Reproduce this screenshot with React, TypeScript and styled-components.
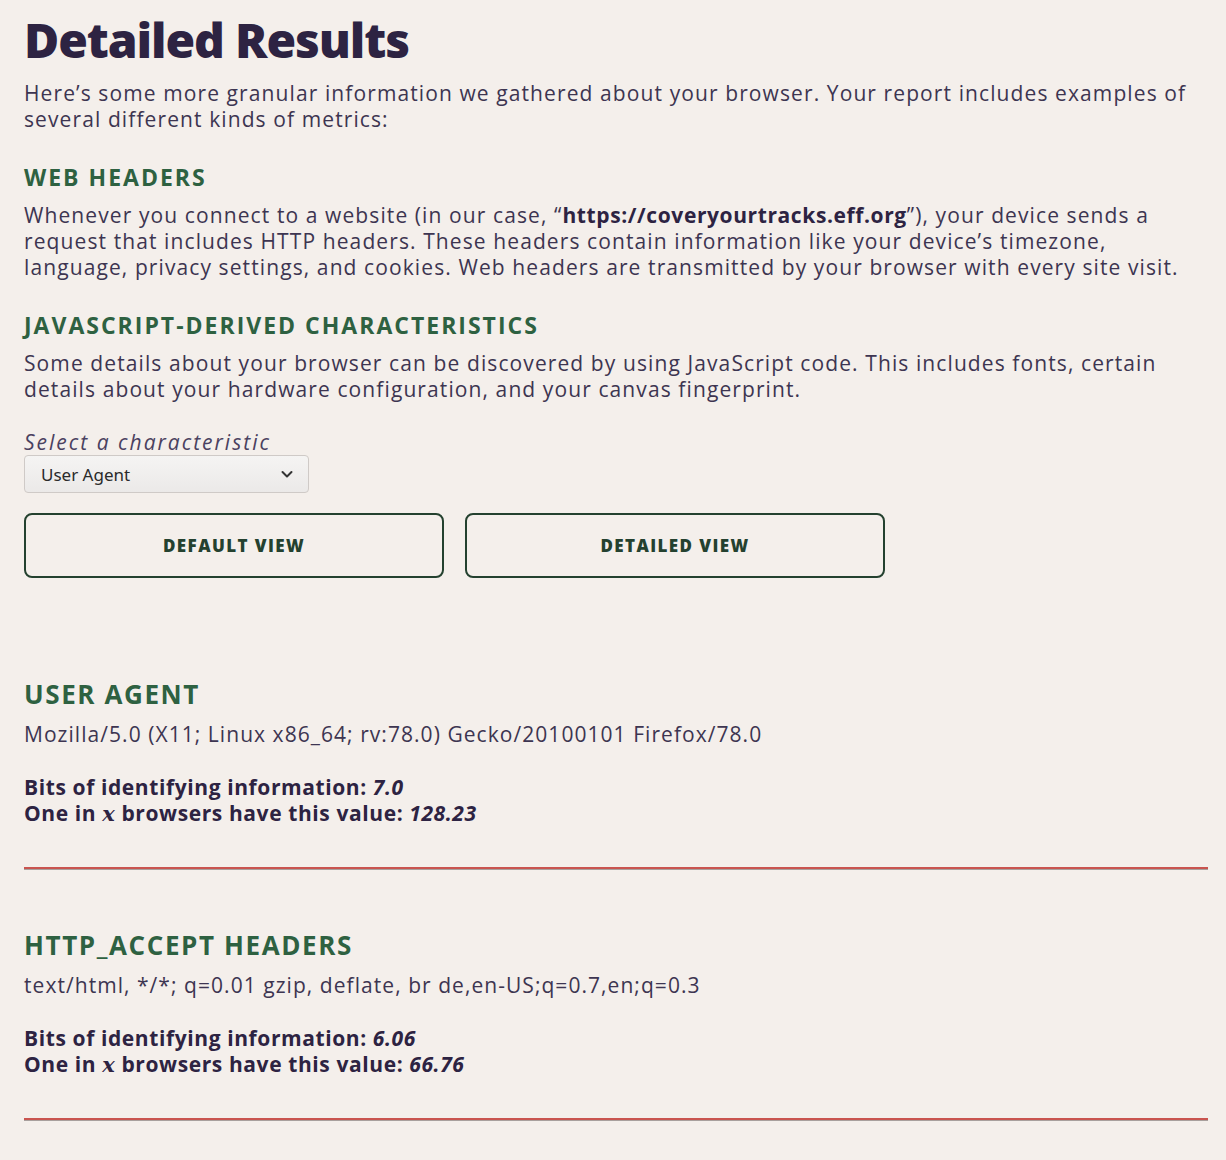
import React from "react";
import styled, { createGlobalStyle } from "styled-components";

const GlobalStyle = createGlobalStyle`
  html, body {
    margin: 0;
    padding: 0;
    background: #f4efeb;
  }
  body {
    font-family: "Open Sans", "Liberation Sans", sans-serif;
    color: #3a3250;
  }
`;

const Page = styled.main`
  box-sizing: border-box;
  width: 1226px;
  padding: 10px 18px 40px 24px;
  background: #f4efeb;
`;

const Title = styled.h1`
  margin: 0 0 10px;
  font-size: 48px;
  line-height: 60px;
  font-weight: 800;
  color: #2d2342;
  letter-spacing: -1.1px;
`;

const Para = styled.p`
  margin: 0;
  font-size: 21px;
  line-height: 26px;
  color: #3d3551;
  letter-spacing: 1.1px;
`;

const Strong = styled.strong`
  font-weight: 700;
  color: #2d2342;
  letter-spacing: 0.6px;
`;

const SectionHeading = styled.h2`
  margin: 0;
  padding: 30px 0 10px;
  font-size: 23px;
  line-height: 30px;
  font-weight: 700;
  letter-spacing: 2px;
  text-transform: uppercase;
  color: #2e6141;
`;

const Field = styled.div`
  display: flex;
  flex-direction: column;
  align-items: flex-start;
  margin-top: 28px;
`;

const Label = styled.label`
  font-size: 21px;
  line-height: 24px;
  font-style: italic;
  letter-spacing: 2px;
  color: #4a4160;
`;

const SelectBox = styled.div`
  box-sizing: border-box;
  width: 285px;
  height: 38px;
  margin-top: 1px;
  padding: 0 14px 0 16px;
  display: flex;
  align-items: center;
  justify-content: space-between;
  border: 1px solid #cfcac7;
  border-radius: 4px;
  background: linear-gradient(#f5f4f3, #ebe9e8);
  font-family: "Noto Sans", "Open Sans", sans-serif;
  font-size: 17px;
  color: #2a2a2a;
`;

const ButtonRow = styled.div`
  display: flex;
  gap: 21px;
  margin-top: 20px;
`;

const ViewButton = styled.button`
  box-sizing: border-box;
  width: 420px;
  height: 65px;
  border: 2px solid #24412f;
  border-radius: 8px;
  background: transparent;
  font-family: "Open Sans", "Liberation Sans", sans-serif;
  font-size: 17px;
  font-weight: 800;
  letter-spacing: 1.4px;
  color: #24412f;
  text-transform: uppercase;
`;

const Result = styled.section`
  padding-top: 100px;
  & + & {
    padding-top: 59px;
  }
`;

const ResultHeading = styled.h3`
  margin: 0 0 11px;
  font-size: 26px;
  line-height: 32px;
  font-weight: 700;
  letter-spacing: 1.6px;
  text-transform: uppercase;
  color: #2e6141;
`;

const Value = styled.p`
  margin: 0 0 27px;
  font-size: 21px;
  line-height: 26px;
  letter-spacing: 1.05px;
  color: #3d3551;
`;

const Stat = styled.p`
  margin: 0;
  font-size: 21px;
  line-height: 26px;
  font-weight: 700;
  letter-spacing: 0.6px;
  color: #2d2342;
`;

const Num = styled.em`
  font-style: italic;
  font-weight: 700;
  margin-left: 6px;
`;

const Var = styled.var`
  font-family: "DejaVu Serif", serif;
  font-style: italic;
  font-weight: 700;
`;

const Divider = styled.hr`
  margin: 40px 0 0;
  height: 0;
  border: none;
  border-top: 2px solid #c9544f;
  border-bottom: 1px solid #a8a09d;
`;

const Chevron = () => (
  <svg width="14" height="14" viewBox="0 0 14 14" fill="none">
    <path d="M2.5 5 L7 9.5 L11.5 5" stroke="#333" strokeWidth="2" strokeLinecap="round" strokeLinejoin="round" />
  </svg>
);

const results = [
  {
    name: "User Agent",
    value: "Mozilla/5.0 (X11; Linux x86_64; rv:78.0) Gecko/20100101 Firefox/78.0",
    bits: "7.0",
    oneIn: "128.23",
  },
  {
    name: "HTTP_ACCEPT Headers",
    value: "text/html, */*; q=0.01 gzip, deflate, br de,en-US;q=0.7,en;q=0.3",
    bits: "6.06",
    oneIn: "66.76",
  },
];

export default function App() {
  return (
    <>
      <GlobalStyle />
      <Page>
        <Title>Detailed Results</Title>
        <Para>
          Here’s some more granular information we gathered about your browser. Your report includes examples of
          several different kinds of metrics:
        </Para>
        <SectionHeading>Web Headers</SectionHeading>
        <Para>
          Whenever you connect to a website (in our case, “<Strong>https://coveryourtracks.eff.org</Strong>”), your
          device sends a request that includes HTTP headers. These headers contain information like your device’s
          timezone, language, privacy settings, and cookies. Web headers are transmitted by your browser with every
          site visit.
        </Para>
        <SectionHeading>JavaScript-Derived Characteristics</SectionHeading>
        <Para>
          Some details about your browser can be discovered by using JavaScript code. This includes fonts, certain
          details about your hardware configuration, and your canvas fingerprint.
        </Para>
        <Field>
          <Label>Select a characteristic</Label>
          <SelectBox>
            <span>User Agent</span>
            <Chevron />
          </SelectBox>
        </Field>
        <ButtonRow>
          <ViewButton>Default View</ViewButton>
          <ViewButton>Detailed View</ViewButton>
        </ButtonRow>
        {results.map((r) => (
          <Result key={r.name}>
            <ResultHeading>{r.name}</ResultHeading>
            <Value>{r.value}</Value>
            <Stat>
              Bits of identifying information:<Num>{r.bits}</Num>
            </Stat>
            <Stat>
              One in <Var>x</Var> browsers have this value:<Num>{r.oneIn}</Num>
            </Stat>
            <Divider />
          </Result>
        ))}
      </Page>
    </>
  );
}
